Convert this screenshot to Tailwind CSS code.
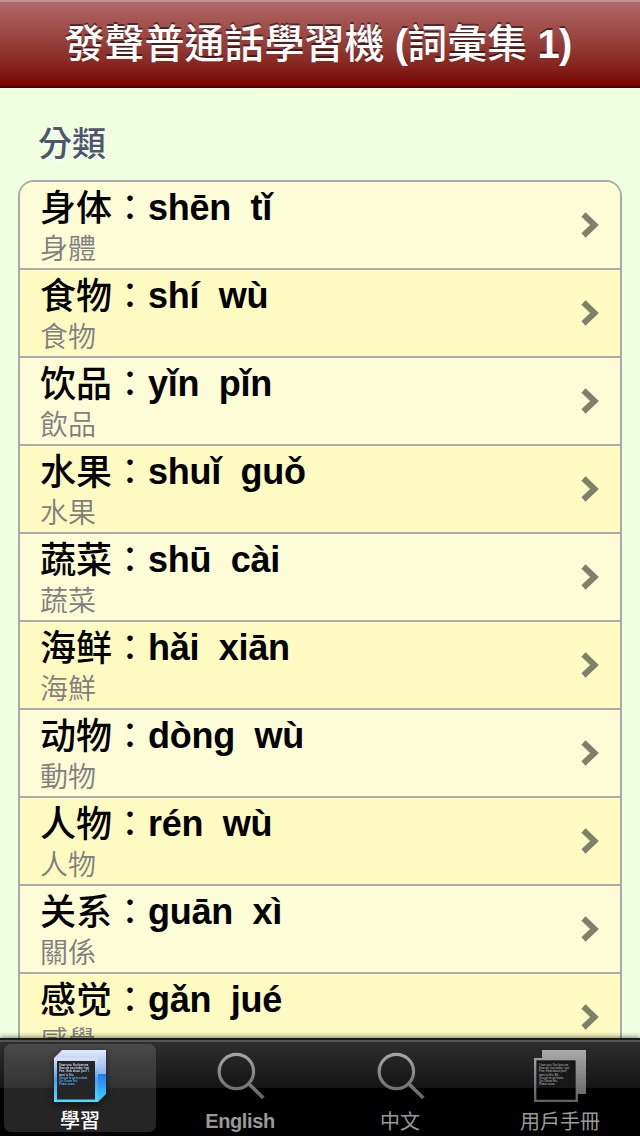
<!DOCTYPE html>
<html lang="zh-Hant">
<head>
<meta charset="utf-8">
<title>發聲普通話學習機</title>
<script src="https://cdn.jsdelivr.net/npm/@tailwindcss/browser@4"></script>
</head>
<body class="w-[640px] h-[1136px] overflow-hidden bg-[#f0ffe0] font-['Liberation_Sans','Noto_Sans_CJK_TC',sans-serif]">
<div class="flex flex-col h-[1136px] w-[640px]">
  <header class="h-[88px] shrink-0 flex justify-center border-t-2 border-t-[#c09090] border-b-2 border-b-[#4c0000] bg-linear-to-b from-[#b06868] to-[#780000]">
    <h1 class="whitespace-pre text-[40px] leading-[84px] text-white [text-shadow:0_-2px_0_rgba(0,0,0,0.5)] font-medium pr-1"><span>發聲普通話學習機</span><span class="font-bold tracking-[-0.8px]"> (</span><span>詞彙集</span><span class="font-bold tracking-[-0.8px]"> 1)</span></h1>
  </header>
  <main class="flex-1 min-h-0 overflow-hidden px-[18px]">
    <h2 class="h-[92px] pt-[32px] pl-[20px] text-[34px] leading-[48px] font-medium text-[#4c566c] [text-shadow:0_2px_0_#fff]">分類</h2>
    <ul id="list" class="border-2 border-[#ababab] rounded-t-[16px] overflow-hidden"></ul>
  </main>
  <nav class="relative h-[98px] shrink-0 grid grid-cols-4 bg-black border-t-2 border-t-[#1a1a1a] shadow-[0_-1px_5px_rgba(0,0,0,0.5)] text-[20px] text-[#999]">
    <div class="absolute inset-x-0 top-0 h-[48px] border-t-2 border-t-[#545454] bg-linear-to-b from-[#2e2e2e] to-[#151515]"></div>
    <div class="relative pt-1 px-1 pb-1">
      <div class="h-[88px] rounded-[7px] flex flex-col items-center bg-linear-to-b from-[#4a4a4a] from-0% via-[#333] via-50% to-[#252525] to-50% text-white">
        <svg class="h-[60px] w-[60px] shrink-0 drop-shadow-[0_2px_3px_rgba(0,0,0,0.6)]" viewBox="50 1044 60 60">
          <defs>
            <linearGradient id="ice" x1="0" y1="0" x2="0" y2="1"><stop offset="0" stop-color="#e0e8fa"/><stop offset=".46" stop-color="#91b2ec"/><stop offset=".46" stop-color="#1c7df0"/><stop offset="1" stop-color="#46d2ff"/></linearGradient>
            <linearGradient id="rim" x1="0" y1="0" x2="0" y2="1"><stop offset="0" stop-color="#d8e4fa"/><stop offset=".5" stop-color="#4b9ff2"/><stop offset="1" stop-color="#50dcff"/></linearGradient>
          </defs>
          <path d="M54 1058L62 1050H106V1094L98 1102H54Z" fill="url(#ice)"/>
          <path d="M54 1058H98V1102H54Z" fill="url(#rim)"/>
          <path d="M57 1061H95V1099.500H57Z" fill="#252525"/>
          <g font-family="Liberation Sans" font-weight="700" font-size="3.800">
            <text x="59" y="1066" fill="#d9e5fb" textLength="30" lengthAdjust="spacingAndGlyphs">I love you. You love me.</text>
            <text x="59" y="1069.200" fill="#d0e0fa" textLength="30" lengthAdjust="spacingAndGlyphs">How are you today. I am</text>
            <text x="59" y="1072.400" fill="#c2d8fa" textLength="30" lengthAdjust="spacingAndGlyphs">Fine. How about you? I</text>
            <text x="59" y="1075.500" fill="#a8ccf8" textLength="15" lengthAdjust="spacingAndGlyphs">want to Stu.</text>
            <text x="59" y="1078.700" fill="#68b5fa" textLength="29" lengthAdjust="spacingAndGlyphs">You got to go to school.</text>
            <text x="59" y="1081.800" fill="#4db0ff" textLength="19" lengthAdjust="spacingAndGlyphs">Yes I know this.</text>
            <text x="59" y="1084.800" fill="#48b9ff" textLength="16" lengthAdjust="spacingAndGlyphs">Please come.</text>
          </g>
        </svg>
        <span class="leading-[28px] pt-[3px] font-medium">學習</span>
      </div>
    </div>
    <div class="relative flex flex-col items-center pt-2">
      <svg class="h-[60px] w-[60px] shrink-0" viewBox="210 1048 60 60"><defs><linearGradient id="gray" gradientUnits="userSpaceOnUse" x1="0" y1="1050" x2="0" y2="1102"><stop offset="0" stop-color="#aaa"/><stop offset="1" stop-color="#606060"/></linearGradient></defs><circle cx="236.400" cy="1071.500" r="17.200" fill="none" stroke="url(#gray)" stroke-width="3.200"/><path d="M248.500 1083.500L263.300 1098" fill="none" stroke="url(#gray)" stroke-width="3.600"/></svg>
      <span class="leading-[28px] -mt-[1px] font-bold tracking-[-0.4px]">English</span>
    </div>
    <div class="relative flex flex-col items-center pt-2">
      <svg class="h-[60px] w-[60px] shrink-0" viewBox="210 1048 60 60"><circle cx="236.400" cy="1071.500" r="17.200" fill="none" stroke="url(#gray)" stroke-width="3.200"/><path d="M248.500 1083.500L263.300 1098" fill="none" stroke="url(#gray)" stroke-width="3.600"/></svg>
      <span class="leading-[28px]">中文</span>
    </div>
    <div class="relative flex flex-col items-center pt-2">
      <svg class="h-[60px] w-[60px] shrink-0" viewBox="530 1048 60 60">
        <path d="M542 1050H586V1094H578V1058H542Z" fill="url(#gray)"/>
        <path d="M535.300 1059.300H576.700V1100.700H535.300Z" fill="none" stroke="url(#gray)" stroke-width="2.600"/>
        <path d="M536.600 1060.600H575.400V1088H536.600Z" fill="#181818"/><path d="M536.600 1088H575.400V1099.400H536.600Z" fill="#000"/>
        <g font-family="Liberation Sans" font-weight="700" font-size="3.800" fill="#999">
          <text x="539" y="1066" textLength="30" lengthAdjust="spacingAndGlyphs">I love you. You love me.</text>
          <text x="539" y="1069.200" textLength="30" lengthAdjust="spacingAndGlyphs">How are you today. I am</text>
          <text x="539" y="1072.400" textLength="28" lengthAdjust="spacingAndGlyphs">Fine. How about you?</text>
          <text x="539" y="1075.500" textLength="20" lengthAdjust="spacingAndGlyphs">want to Stu. Eh.</text>
          <text x="539" y="1078.700" textLength="25" lengthAdjust="spacingAndGlyphs">You got to go home.</text>
          <text x="539" y="1081.800" textLength="19" lengthAdjust="spacingAndGlyphs">Yes I know this.</text>
          <text x="539" y="1084.800" textLength="16" lengthAdjust="spacingAndGlyphs">Please come.</text>
        </g>
      </svg>
      <span class="leading-[28px]">用戶手冊</span>
    </div>
  </nav>
</div>
<template id="row">
  <li class="h-[88px] flex justify-between border-b-2 border-[#ababab] odd:bg-[#fcfcd6] even:bg-[#fdfbc2] pl-[20px] pr-[20px]">
    <div>
      <p class="h-[51px] whitespace-pre text-[36px] text-black flex items-start"><span data-hans class="leading-[46px] font-medium font-['Noto_Sans_CJK_SC',sans-serif]" lang="zh-Hans"></span><span class="leading-[46px] font-normal font-['Noto_Sans_CJK_TC',sans-serif]">：</span><span data-pinyin class="leading-[52px] font-bold tracking-[-0.25px]"></span></p>
      <p data-hant class="text-[28px] leading-[28px] font-[350] text-[#7f7f7f] font-['Noto_Sans_CJK_TC',sans-serif]"></p>
    </div>
    <svg class="w-[20px] h-[28px] mt-[29px]" viewBox="0 0 20 28"><path d="M3.500 3.500L14.500 14L3.500 24.500" fill="none" stroke="#808068" stroke-width="6"/></svg>
  </li>
</template>
<script>
const rows = [
  ['身体','shēn  tǐ','身體'],['食物','shí  wù','食物'],['饮品','yǐn  pǐn','飲品'],['水果','shuǐ  guǒ','水果'],['蔬菜','shū  cài','蔬菜'],
  ['海鲜','hǎi  xiān','海鮮'],['动物','dòng  wù','動物'],['人物','rén  wù','人物'],['关系','guān  xì','關係'],['感觉','gǎn  jué','感覺']
];
const list = document.getElementById('list'), tpl = document.getElementById('row');
for (const [hans, pinyin, hant] of rows) {
  const li = tpl.content.cloneNode(true);
  li.querySelector('[data-hans]').textContent = hans;
  li.querySelector('[data-pinyin]').textContent = pinyin;
  li.querySelector('[data-hant]').textContent = hant;
  list.append(li);
}
</script>
</body>
</html>
